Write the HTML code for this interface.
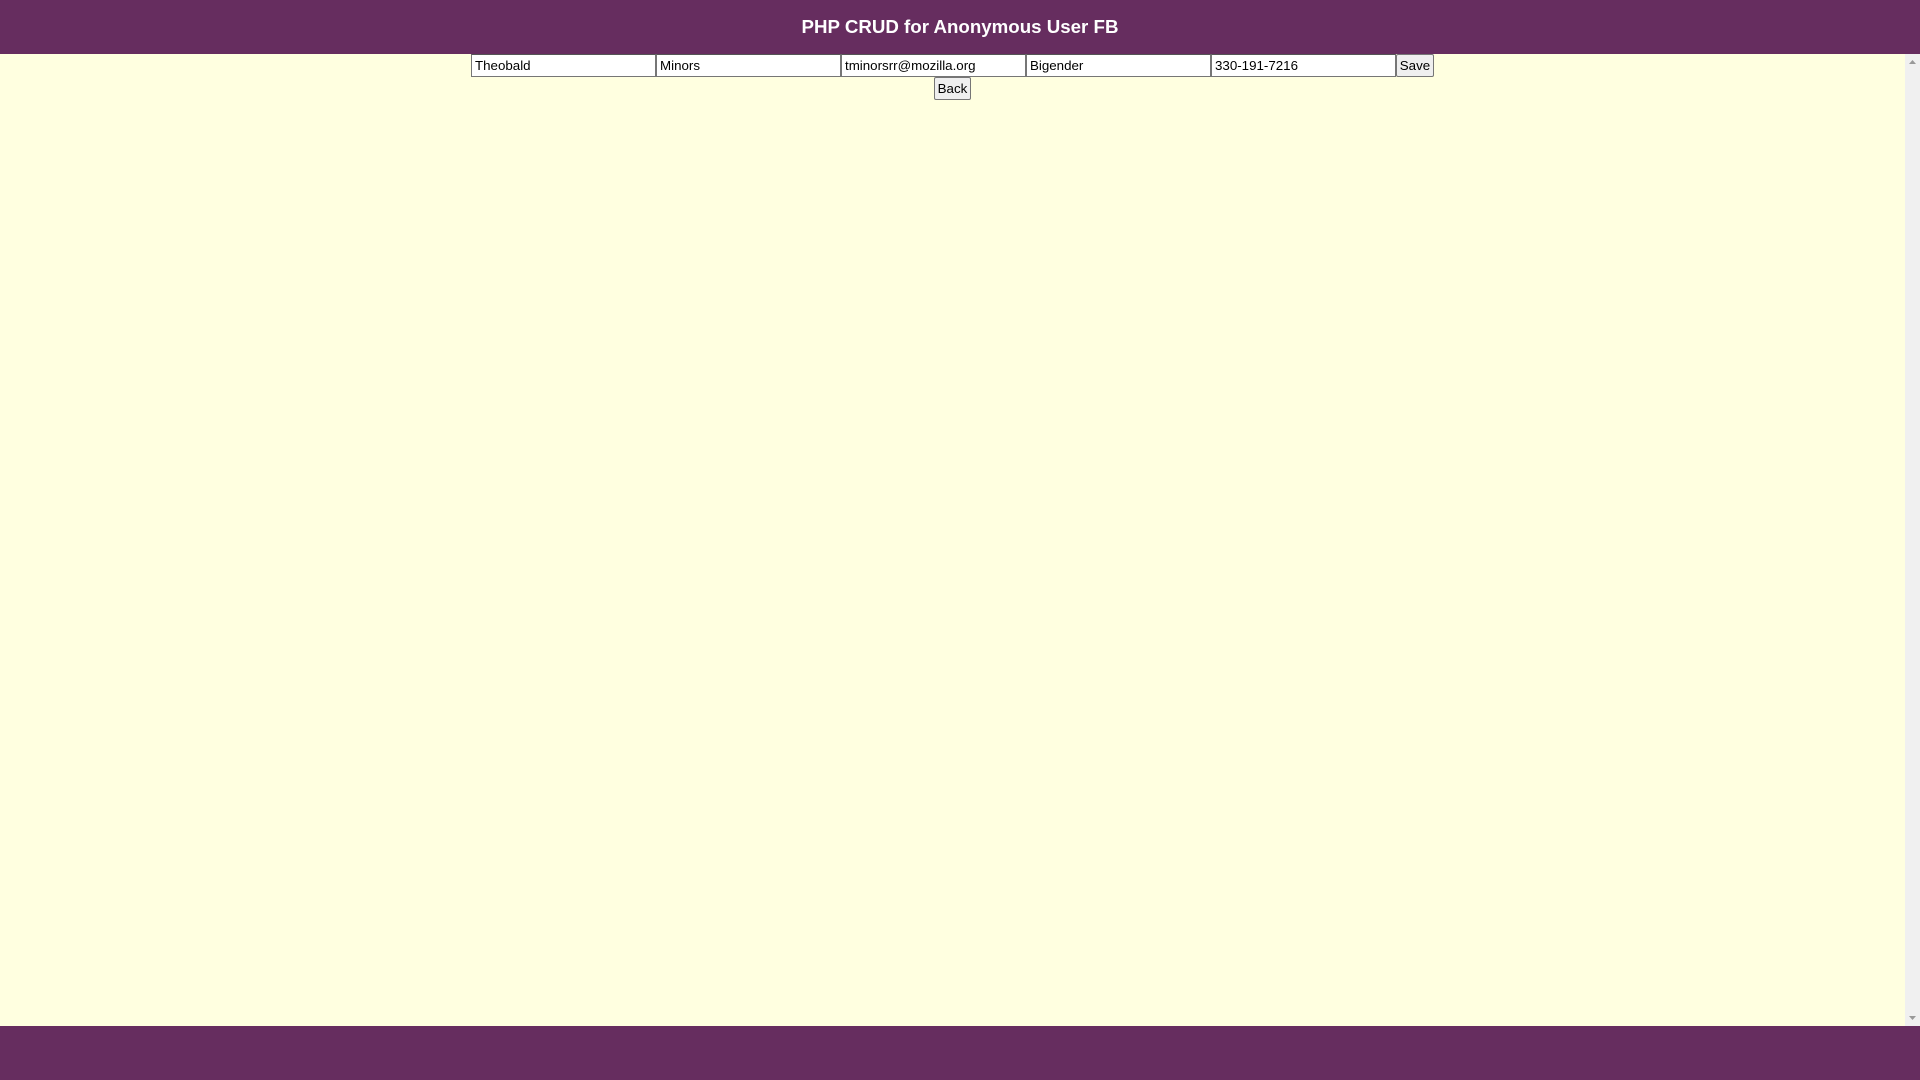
<!DOCTYPE html>
<html><head><style>
html,body{margin:0;padding:0;}
body{width:1920px;height:1080px;background:#ffffe0;font-family:"Liberation Sans",Arial,sans-serif;position:relative;overflow:hidden;}
.hdr{position:absolute;left:0;top:0;width:1920px;height:54px;color:#fff;font-weight:bold;font-size:18.72px;text-align:center;line-height:54px;}
.hbg{position:absolute;left:0;top:0;width:1920px;height:54px;background:#662d5f;}
.ftr{position:absolute;left:0;top:1026px;width:1920px;height:54px;background:#662d5f;}
.sb{position:absolute;left:1905px;top:54px;width:15px;height:972px;background:#f0f0f0;}
.row{position:absolute;top:54px;left:471px;height:23px;display:flex;}
.in{box-sizing:border-box;width:185px;height:23px;border:1px solid #767676;border-top-color:#555;background:#fff;font-size:13.33px;padding:0 3px;line-height:21px;color:#000;}
.btn{box-sizing:border-box;height:23px;border:1px solid #767676;border-radius:2px;background:#efefef;font-size:13.33px;line-height:21px;padding:0 3px;color:#000;}
</style></head><body>
<div class="hbg"></div>
<div class="hdr">PHP CRUD for Anonymous User FB</div>
<div class="row">
<div class="in">Theobald</div><div class="in">Minors</div><div class="in">tminorsrr@mozilla.org</div><div class="in">Bigender</div><div class="in">330-191-7216</div><div class="btn" style="width:38px;text-align:center;padding:0">Save</div>
</div>
<div class="btn" style="position:absolute;left:934px;top:77px;width:37px;height:23px;text-align:center;padding:0">Back</div>
<div class="sb">
<svg width="15" height="972" style="position:absolute;left:0;top:0"><polygon points="4,10 11,10 7.5,6" fill="#999"/><polygon points="4,962 11,962 7.5,966" fill="#999"/></svg>
</div>
<div class="ftr"></div>
</body></html>
